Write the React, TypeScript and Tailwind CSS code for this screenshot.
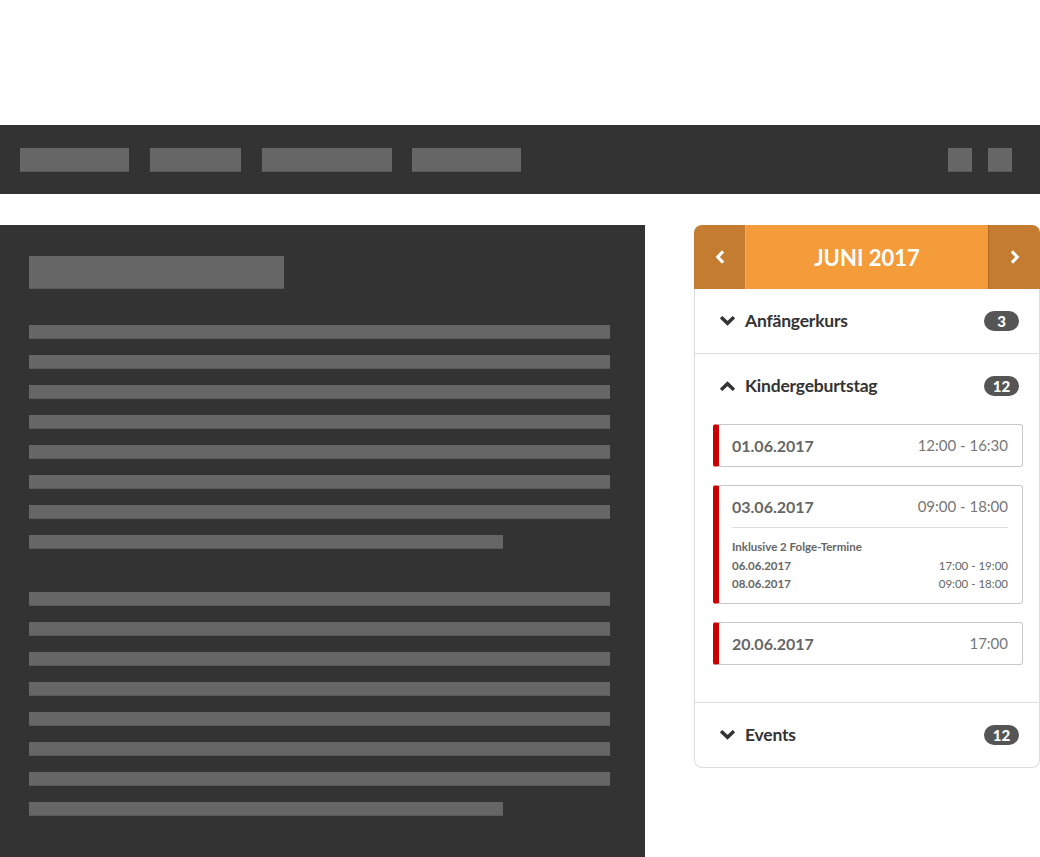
interface Slot {
  date: string;
  time: string;
  extra?: { date: string; time: string }[];
}

const slots: Slot[] = [
  { date: "01.06.2017", time: "12:00 - 16:30" },
  {
    date: "03.06.2017",
    time: "09:00 - 18:00",
    extra: [
      { date: "06.06.2017", time: "17:00 - 19:00" },
      { date: "08.06.2017", time: "09:00 - 18:00" },
    ],
  },
  { date: "20.06.2017", time: "17:00" },
];

const Bar = ({ className }: { className: string }) => (
  <div className={`bg-[#666666] border-b border-[#5a5a5a] ${className}`} />
);

const Chevron = ({ dir }: { dir: "up" | "down" | "left" | "right" }) => {
  if (dir === "left" || dir === "right") {
    return (
      <svg width="10" height="14" viewBox="0 0 10 14" fill="none">
        <polyline
          points={dir === "left" ? "7,2.5 2.8,7 7,11.5" : "3,2.5 7.2,7 3,11.5"}
          stroke="white"
          strokeWidth="3.2"
          strokeLinecap="square"
        />
      </svg>
    );
  }
  return (
    <svg width="15" height="10" viewBox="0 0 15 10" fill="none">
      <polyline
        points={dir === "down" ? "2.3,2.3 7.5,7.3 12.7,2.3" : "2.3,7.7 7.5,2.7 12.7,7.7"}
        stroke="#333333"
        strokeWidth="3.4"
        strokeLinecap="square"
      />
    </svg>
  );
};

const Badge = ({ count }: { count: number }) => (
  <span className="flex h-5 w-[35px] items-center justify-center rounded-full bg-[#555555] text-[15px] font-black leading-none text-white">
    {count}
  </span>
);

const GroupRow = ({ title, count, open }: { title: string; count: number; open?: boolean }) => (
  <div className="flex h-16 items-center pl-[25px] pr-[20px]">
    <Chevron dir={open ? "up" : "down"} />
    <span className="ml-[10px] flex-1 text-[17.5px] font-bold tracking-[-0.2px] text-[#333333]">{title}</span>
    <Badge count={count} />
  </div>
);

const SlotCard = ({ slot }: { slot: Slot }) => (
  <div className="rounded-[3px] border border-l-[6px] border-[#c8c8c8] border-l-[#cc0000] pl-[13px] pr-[14px]">
    <div className="flex h-[41px] items-center justify-between text-[16px] text-[#666666]">
      <span className="font-bold">{slot.date}</span>
      <span className="text-[15px] text-[#777777]">{slot.time}</span>
    </div>
    {slot.extra && (
      <div className="border-t border-[#dddddd] pb-[10px] pt-[9px] text-[11.5px] font-bold text-[#666666]">
        <div className="leading-[20px]">Inklusive 2 Folge-Termine</div>
        {slot.extra.map((e) => (
          <div key={e.date} className="flex justify-between leading-[18px]">
            <span>{e.date}</span>
            <span className="font-normal">{e.time}</span>
          </div>
        ))}
      </div>
    )}
  </div>
);

const Paragraph = () => (
  <div className="flex flex-col gap-4">
    {[0, 1, 2, 3, 4, 5, 6].map((i) => (
      <Bar key={i} className="h-[14px] w-[581px]" />
    ))}
    <Bar className="h-[14px] w-[474px]" />
  </div>
);

export default function App() {
  return (
    <div className="h-[857px] overflow-hidden bg-white font-['Lato',sans-serif]">
      <div className="h-[125px]" />
      <div className="flex h-[69px] items-center bg-[#333333] pl-5 pr-[28px]">
        <div className="flex flex-1">
          <Bar className="h-6 w-[109px]" />
          <Bar className="ml-[21px] h-6 w-[91px]" />
          <Bar className="ml-[21px] h-6 w-[130px]" />
          <Bar className="ml-5 h-6 w-[109px]" />
        </div>
        <div className="flex gap-4">
          <Bar className="h-6 w-6" />
          <Bar className="h-6 w-6" />
        </div>
      </div>

      <div className="mt-[31px] flex items-start gap-[49px]">
        <div className="h-[632px] w-[645px] bg-[#333333] pl-[29px] pt-[31px]">
          <Bar className="h-[33px] w-[255px]" />
          <div className="mt-[36px] flex flex-col gap-[43px]">
            <Paragraph />
            <Paragraph />
          </div>
        </div>

        <div className="w-[346px]">
          <div className="flex h-16 overflow-hidden rounded-t-lg text-white">
            <div className="flex w-[52px] items-center justify-center border-r border-[#e6b07a] bg-[#c47c31]">
              <Chevron dir="left" />
            </div>
            <div className="flex flex-1 items-center justify-center bg-[#f49c3a] text-[22px] font-bold">
              JUNI 2017
            </div>
            <div className="flex w-[52px] items-center justify-center border-l border-[#b06c28] bg-[#c47c31]">
              <Chevron dir="right" />
            </div>
          </div>
          <div className="rounded-b-lg border-x border-b border-[#dddddd] bg-white">
            <div className="border-b border-[#dddddd]">
              <GroupRow title="Anfängerkurs" count={3} />
            </div>
            <div className="border-b border-[#dddddd] pb-[37px]">
              <GroupRow title="Kindergeburtstag" count={12} open />
              <div className="mt-[6px] flex flex-col gap-[18px] pl-[18px] pr-[16px]">
                {slots.map((s) => (
                  <SlotCard key={s.date} slot={s} />
                ))}
              </div>
            </div>
            <GroupRow title="Events" count={12} />
          </div>
        </div>
      </div>
    </div>
  );
}
